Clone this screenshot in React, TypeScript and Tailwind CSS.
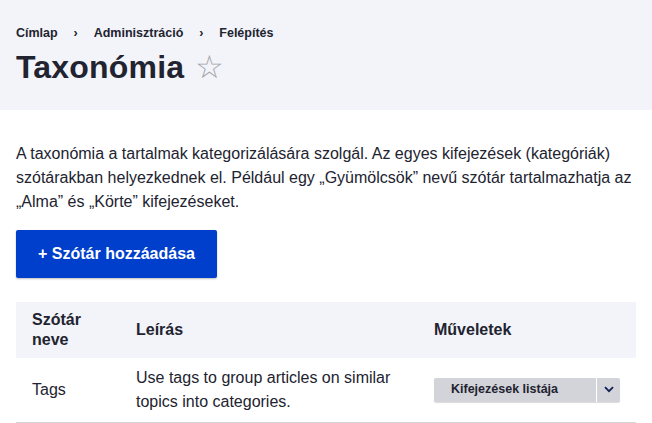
import React from "react";

export default function App() {
  return (
    <div className="w-[652px] h-[423px] overflow-hidden bg-white text-[#222330]" style={{ fontFamily: '"Liberation Sans", Arial, sans-serif' }}>
      <div className="bg-[#f3f4f9] h-[110px] px-4 pt-[24px]">
        <nav className="flex items-center text-[12.5px] font-bold leading-[18px]">
          <span>Címlap</span>
          <span className="mx-[14px] w-[8px] text-center">›</span>
          <span>Adminisztráció</span>
          <span className="mx-[14px] w-[8px] text-center">›</span>
          <span>Felépítés</span>
        </nav>
        <div className="flex items-center mt-[5px]">
          <h1 className="text-[32px] font-bold leading-[40px] tracking-[0.2px]">Taxonómia</h1>
          <span className="ml-[11px] text-[32px] leading-[40px] text-[#a4a5ab]">☆</span>
        </div>
      </div>
      <div className="px-4 pt-[32px]">
        <p className="text-[16px] leading-[24px]">
          A taxonómia a tartalmak kategorizálására szolgál. Az egyes kifejezések (kategóriák) szótárakban helyezkednek el. Például egy „Gyümölcsök” nevű szótár tartalmazhatja az „Alma” és „Körte” kifejezéseket.
        </p>
        <button className="mt-[16px] h-[48px] w-[201px] bg-[#003ecc] text-white text-[16px] font-bold rounded-[2px] shadow-[0_1px_2px_rgba(0,0,0,0.25)]">
          + Szótár hozzáadása
        </button>
        <table className="mt-[24px] w-[620px] table-fixed border-collapse text-[16px]">
          <colgroup>
            <col className="w-[104px]" />
            <col className="w-[298px]" />
            <col className="w-[218px]" />
          </colgroup>
          <thead>
            <tr className="bg-[#f3f4f9] h-[56px]">
              <th className="text-left font-bold leading-[20px] pl-4 pr-2">Szótár<br />neve</th>
              <th className="text-left font-bold leading-[20px] pl-4">Leírás</th>
              <th className="text-left font-bold leading-[20px] pl-4">Műveletek</th>
            </tr>
          </thead>
          <tbody>
            <tr className="h-[64px] border-b border-[#d3d4d9]">
              <td className="pl-4 leading-[24px]">Tags</td>
              <td className="pl-4 pr-2 leading-[24px]">Use tags to group articles on similar topics into categories.</td>
              <td className="pl-4">
                <div className="flex h-[24px] w-[186px] bg-[#d3d4d9] rounded-[2px] shadow-[0_1px_1px_rgba(0,0,0,0.15)]">
                  <span className="flex-1 flex items-center pl-[17px] text-[12.5px] font-bold">Kifejezések listája</span>
                  <span className="w-px bg-white" />
                  <span className="w-[23px] flex items-center justify-center">
                    <svg width="10" height="7" viewBox="0 0 10 7"><path d="M1 1.2 L5 5.2 L9 1.2" fill="none" stroke="#0f2354" strokeWidth="1.8" /></svg>
                  </span>
                </div>
              </td>
            </tr>
          </tbody>
        </table>
      </div>
    </div>
  );
}
